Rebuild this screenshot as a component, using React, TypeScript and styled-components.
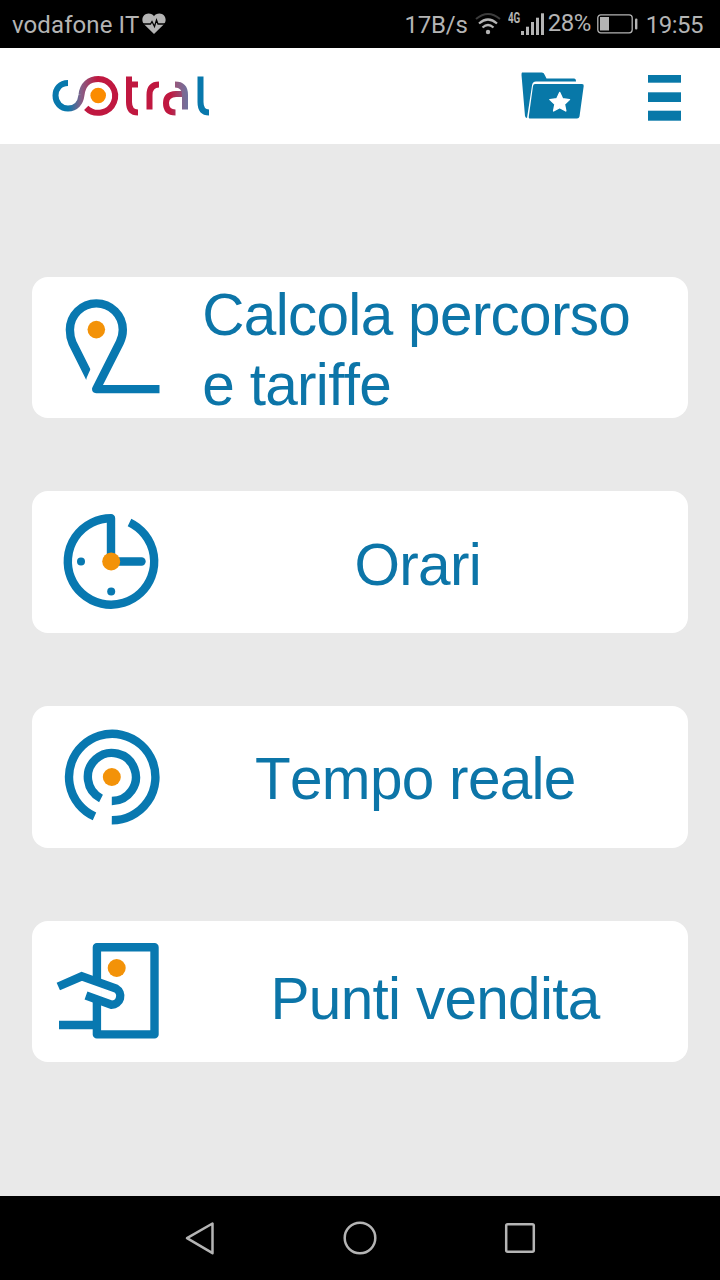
import React from "react";
import styled, { createGlobalStyle } from "styled-components";

const BLUE = "#0878b0";
const TEXT_BLUE = "#0c75a8";
const ORANGE = "#f39208";
const GREY = "#b4b4b4";

const GlobalStyle = createGlobalStyle`
  * { box-sizing: border-box; }
  body { margin: 0; background: #e9e9e9; }
  svg { display: block; flex: none; }
`;

const Screen = styled.div`
  width: 720px;
  height: 1280px;
  display: flex;
  flex-direction: column;
  background: #e9e9e9;
  overflow: hidden;
`;

const StatusBar = styled.div`
  height: 48px;
  flex: none;
  display: flex;
  align-items: center;
  justify-content: space-between;
  padding: 0 17px 0 12px;
  background: #000;
  color: ${GREY};
`;

const StatusGroup = styled.div<{ $gap?: number }>`
  display: flex;
  align-items: center;
  gap: ${(p) => p.$gap ?? 0}px;
`;

const StatusText = styled.span<{ $tracking?: number; $raised?: boolean }>`
  font-family: Roboto, sans-serif;
  font-size: 24px;
  line-height: 28px;
  letter-spacing: ${(p) => p.$tracking ?? 0}px;
  padding: ${(p) => (p.$raised ? "0 0 2px" : "2px 0 0")};
  white-space: nowrap;
`;

const Network = styled.span`
  width: 12px;
  height: 24px;
  font: 700 14px/12px Roboto, sans-serif;
  transform: scaleX(0.7);
  transform-origin: left;
`;

const Header = styled.header`
  height: 96px;
  flex: none;
  display: flex;
  align-items: center;
  justify-content: space-between;
  padding: 0 36px 0 48px;
  background: #fff;
`;

const Actions = styled.div`
  display: flex;
  align-items: center;
  gap: 60px;
`;

const IconButton = styled.button`
  border: 0;
  padding: 0;
  background: none;
`;

const Menu = styled.main`
  flex: 1;
  display: flex;
  flex-direction: column;
  gap: 73.1px;
  padding: 132.6px 32px 0;
`;

const Card = styled.button`
  height: 141.6px;
  flex: none;
  display: flex;
  align-items: center;
  border: 0;
  padding: 0;
  border-radius: 16px;
  background: #fff;
  text-align: left;
`;

const CardIcon = styled.span`
  width: 140px;
  flex: none;
  align-self: flex-start;
`;

const Label = styled.span<{ $left: number; $drop: number }>`
  font-family: "Liberation Sans", Arial, sans-serif;
  font-size: 58.5px;
  line-height: 70px;
  letter-spacing: -0.7px;
  font-kerning: none;
  color: ${TEXT_BLUE};
  white-space: pre-line;
  padding-left: ${(p) => p.$left}px;
  padding-top: ${(p) => p.$drop}px;
`;

const NavBar = styled.nav`
  height: 84px;
  flex: none;
  display: flex;
  align-items: center;
  justify-content: center;
  gap: 120px;
  background: #000;
`;

const HeartIcon = () => (
  <svg width="24" height="22" viewBox="0 0 24 22">
    <path d="M12 21 2.300 11.500C-2 6.500 1.500 0.500 6.500 0.500 9 0.500 11 1.500 12 3.200c1-1.700 3-2.700 5.500-2.700 5 0 8.500 6 4.200 11Z" fill={GREY} />
    <path d="M1 11h7.500l1.500-2.500 2.500 5 2-6.500 1.500 4H23" fill="none" stroke="#000" strokeWidth="1.300" />
  </svg>
);

const WifiIcon = () => (
  <svg width="26" height="24" viewBox="0 0 26 24" fill="none" stroke={GREY} strokeWidth="2">
    <path d="M1 7Q13-3 25 7" stroke="#3c3c3c" />
    <path d="M4 11.500Q13 3.500 22 11.500M7.500 15.500Q13 10.500 18.500 15.500" strokeWidth="2.200" />
    <circle cx="13" cy="20" r="2.200" fill={GREY} stroke="none" />
  </svg>
);

const SignalIcon = () => (
  <svg width="25" height="24" viewBox="0 0 25 24" fill={GREY}>
    <rect x="1" y="19" width="3" height="4" />
    <rect x="6" y="14.700" width="3" height="8.300" />
    <rect x="11" y="10" width="3" height="13" />
    <rect x="16" y="5.700" width="3" height="17.300" />
    <rect x="21" y="1.300" width="3" height="21.700" />
  </svg>
);

const BatteryIcon = () => (
  <svg width="41" height="20" viewBox="0 0 41 20">
    <rect x="0.800" y="0.800" width="34.400" height="18" rx="3" fill="none" stroke={GREY} strokeWidth="1.300" />
    <rect x="3" y="3" width="9" height="13.500" fill={GREY} />
    <rect x="38" y="4.500" width="2.400" height="11" rx="1" fill={GREY} />
  </svg>
);

const CotralLogo = () => (
  <svg width="166" height="48" viewBox="48 72 166 48" fill="none" strokeWidth="6">
    <defs>
      <linearGradient id="swirl" gradientUnits="userSpaceOnUse" x1="68" y1="0" x2="97" y2="0">
        <stop offset="0" stopColor="#0878ac" />
        <stop offset="0.450" stopColor="#856088" />
        <stop offset="1" stopColor="#c01840" />
      </linearGradient>
      <linearGradient id="arch" gradientUnits="userSpaceOnUse" x1="168" y1="0" x2="187" y2="0">
        <stop offset="0" stopColor="#b04868" />
        <stop offset="1" stopColor="#70709c" />
      </linearGradient>
      <linearGradient id="bowl" gradientUnits="userSpaceOnUse" x1="166" y1="0" x2="188" y2="0">
        <stop offset="0.200" stopColor="#c01840" />
        <stop offset="1" stopColor="#806890" />
      </linearGradient>
    </defs>
    <path d="M68 83C60 83 55.500 89 55.500 95.500C55.500 103 61 108.500 68 108.500C76 108.500 80.500 103 81.500 95C82.500 85 89 79 98.500 79" stroke="url(#swirl)" />
    <path d="M98 79A16.900 16.900 0 1 1 86.200 107.800" stroke="#c01840" />
    <circle cx="98.200" cy="95.500" r="7.800" fill="#fb8c00" />
    <path d="M129 76.500V102Q129 112.500 138 112.500M129 84.500H138" stroke="#c01840" />
    <path d="M149.500 109.500V95Q149.500 84.500 159 84.500" stroke="#c01840" />
    <path d="M185 94H176Q166 94.500 166 103Q166 112.500 175.500 112.500" stroke="url(#bowl)" />
    <path d="M175 84.500Q185 84.500 185 95V109.500" stroke="url(#arch)" />
    <path d="M200.500 76.500V102Q200.500 112.500 209 112.500" stroke="#0878ac" />
  </svg>
);

const FolderStarIcon = () => (
  <svg width="64" height="48" viewBox="0 0 64 48" fill="#0878a8">
    <path d="M2 0.500H22Q24 0.500 25 3.500L26.500 6.500H54Q56 6.500 56 9.500H16Q12.500 9.500 12 13.500L7 46Q5.500 46 5 44L1.500 3Q1.500 0.500 2 0.500Z" />
    <path d="M15 12H62Q64 12 63.700 14L59.500 44.500Q59 46.500 57 46.500H9.500Q8.500 46.500 8.800 44.500L13 14Q13.400 12 15 12Z" />
    <path d="m39.700 20.500 2.900 6.200 6.900.9-5 4.700 1.300 6.700-6.100-3.300-6.100 3.300 1.300-6.700-5-4.700 6.900-.9Z" fill="#fff" stroke="#fff" strokeWidth="1.400" strokeLinejoin="round" />
  </svg>
);

const BarsIcon = () => (
  <svg width="40" height="50" viewBox="0 0 40 50" fill="#0878a8">
    <rect x="4" y="4" width="33" height="7.700" />
    <rect x="4" y="21.300" width="33" height="9.700" />
    <rect x="4" y="39.700" width="33" height="10" />
  </svg>
);

const Glyph = ({ children }: { children: React.ReactNode }) => (
  <svg width="140" height="141" viewBox="0 0 140 141" fill="none" stroke={BLUE} strokeWidth="8.400">
    {children}
  </svg>
);

const RouteIcon = () => (
  <Glyph>
    <path d="M58 101 40.500 66Q37.900 60 37.900 52.800A26.450 26.450 0 0 1 90.800 52.800Q90.800 59.500 87.800 65.500L64.200 112.100H127.500" strokeLinejoin="round" />
    <path d="M60.300 88 67 94 60 105.500 53 108 54.700 100.700Z" fill="#fff" stroke="none" />
    <circle cx="64.300" cy="52.600" r="8.800" fill={ORANGE} stroke="none" />
  </Glyph>
);

const ClockIcon = () => (
  <Glyph>
    <path d="M79 70.500V27.300A43.200 43.200 0 1 0 97.500 31.460" strokeLinejoin="round" />
    <path d="M83 70.500H109.500" strokeLinecap="round" />
    <circle cx="49" cy="70.500" r="4" fill={BLUE} stroke="none" />
    <circle cx="79.200" cy="100.500" r="4" fill={BLUE} stroke="none" />
    <circle cx="79.200" cy="70.500" r="9" fill={ORANGE} stroke="none" />
  </Glyph>
);

const LiveIcon = () => (
  <Glyph>
    <path d="M79.800 114.200A43.200 43.200 0 1 0 62.500 110.400" />
    <path d="M79.800 95A24 24 0 1 0 69 92.400" />
    <circle cx="79.800" cy="71" r="9" fill={ORANGE} stroke="none" />
  </Glyph>
);

const SalesIcon = () => (
  <Glyph>
    <rect x="64.900" y="26.200" width="57.600" height="87.200" strokeLinejoin="round" />
    <rect x="60" y="63" width="9.800" height="13" fill="#fff" stroke="none" />
    <path d="M26.300 65.500 49.700 55.300 84 67.500A8.700 8.700 0 0 1 79.500 83.700L54 74.500" />
    <path d="M27 104H65" />
    <circle cx="84.700" cy="47" r="9" fill={ORANGE} stroke="none" />
  </Glyph>
);

const BackIcon = () => (
  <svg width="40" height="40" viewBox="0 0 40 40" fill="none" stroke={GREY} strokeWidth="2.500" strokeLinejoin="round">
    <path d="M7 20.200 32.500 5.500V35.200Z" />
  </svg>
);

const HomeIcon = () => (
  <svg width="40" height="40" viewBox="0 0 40 40" fill="none" stroke={GREY} strokeWidth="2.500">
    <circle cx="20" cy="20" r="15.300" />
  </svg>
);

const RecentsIcon = () => (
  <svg width="40" height="40" viewBox="0 0 40 40" fill="none" stroke={GREY} strokeWidth="2.500">
    <rect x="6.200" y="6.200" width="27.600" height="27.600" rx="1.500" />
  </svg>
);

const ITEMS = [
  { text: "Calcola percorso\ne tariffe", Icon: RouteIcon, left: 30.3, drop: 5.2 },
  { text: "Orari", Icon: ClockIcon, left: 182.5, drop: 5.2 },
  { text: "Tempo reale", Icon: LiveIcon, left: 83, drop: 5.2 },
  { text: "Punti vendita", Icon: SalesIcon, left: 98.5, drop: 14.2 },
];

export default function App() {
  return (
    <>
      <GlobalStyle />
      <Screen>
        <StatusBar>
          <StatusGroup $gap={3}>
            <StatusText $tracking={0.1}>vodafone IT</StatusText>
            <HeartIcon />
          </StatusGroup>
          <StatusGroup $gap={8}>
            <StatusGroup $gap={3}>
              <StatusGroup $gap={7}>
                <StatusText $tracking={-0.2}>17B/s</StatusText>
                <WifiIcon />
                <StatusGroup>
                  <Network>4G</Network>
                  <SignalIcon />
                </StatusGroup>
              </StatusGroup>
              <StatusGroup $gap={6}>
                <StatusText $tracking={-0.5} $raised>28%</StatusText>
                <BatteryIcon />
              </StatusGroup>
            </StatusGroup>
            <StatusText $tracking={-0.5}>19:55</StatusText>
          </StatusGroup>
        </StatusBar>
        <Header>
          <CotralLogo />
          <Actions>
            <IconButton aria-label="Preferiti"><FolderStarIcon /></IconButton>
            <IconButton aria-label="Menu"><BarsIcon /></IconButton>
          </Actions>
        </Header>
        <Menu>
          {ITEMS.map(({ text, Icon, left, drop }) => (
            <Card key={text}>
              <CardIcon><Icon /></CardIcon>
              <Label $left={left} $drop={drop}>{text}</Label>
            </Card>
          ))}
        </Menu>
        <NavBar>
          <BackIcon />
          <HomeIcon />
          <RecentsIcon />
        </NavBar>
      </Screen>
    </>
  );
}
